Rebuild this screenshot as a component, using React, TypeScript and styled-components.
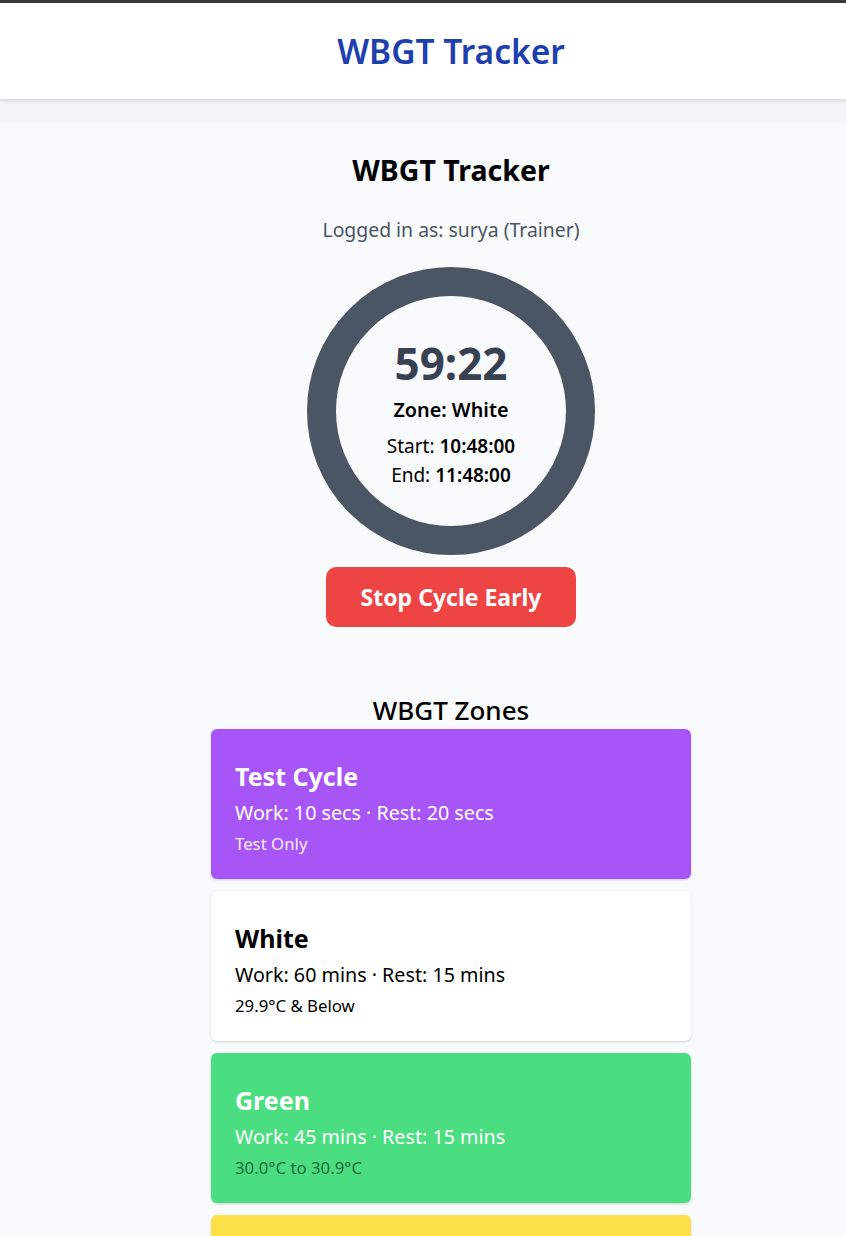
import React from "react";
import styled, { createGlobalStyle } from "styled-components";

const GlobalStyle = createGlobalStyle`
  html, body {
    margin: 0;
    padding: 0;
    overflow-x: hidden;
    background: #f9fafb;
  }
  body {
    font-family: "Noto Sans", "Open Sans", Arial, sans-serif;
    color: #000;
  }
  * { box-sizing: border-box; }
`;

const Page = styled.div`
  width: 902px;
  min-height: 1236px;
  border-top: 3px solid #3b3b3b;
  background: #f9fafb;
`;

const Header = styled.header`
  height: 96px;
  background: #ffffff;
  display: flex;
  align-items: center;
  justify-content: center;
  box-shadow: 0 2px 4px rgba(0, 0, 0, 0.12);
  position: relative;
  z-index: 1;
`;

const HeaderTitle = styled.h1`
  margin: 0;
  font-size: 33.5px;
  font-weight: 600;
  color: #1e40af;
`;

const Gap = styled.div`
  height: 23px;
  background: #f3f4f6;
`;

const Main = styled.main`
  display: flex;
  flex-direction: column;
  align-items: center;
  padding-top: 30px;
`;

const Title = styled.h2`
  margin: 0;
  font-size: 28.5px;
  line-height: 36px;
  font-weight: 700;
`;

const LoggedIn = styled.p`
  margin: 29px 0 0;
  font-size: 19.4px;
  line-height: 26px;
  color: #4b5563;
`;

const Ring = styled.div`
  margin-top: 24px;
  width: 288px;
  height: 288px;
  border-radius: 50%;
  border: 29px solid #4b5563;
  display: flex;
  flex-direction: column;
  align-items: center;
  justify-content: center;
`;

const Time = styled.div`
  font-size: 44px;
  line-height: 56px;
  font-weight: 700;
  color: #374151;
  margin-top: 2px;
`;

const Zone = styled.div`
  font-size: 19.8px;
  line-height: 28px;
  font-weight: 600;
  margin-top: 5px;
`;

const TimeLine = styled.div<{ $first?: boolean }>`
  font-size: 19px;
  line-height: 29px;
  margin-top: ${(p) => (p.$first ? "8px" : "0")};
  b { font-weight: 600; }
`;

const StopButton = styled.button`
  margin-top: 12px;
  width: 250px;
  height: 60px;
  border: none;
  border-radius: 10px;
  background: #ef4444;
  color: #ffffff;
  font-family: inherit;
  font-size: 23px;
  font-weight: 700;
  cursor: pointer;
`;

const ZonesTitle = styled.h3`
  margin: 66px 0 0;
  font-size: 26px;
  line-height: 34px;
  font-weight: 500;
`;

const ZoneList = styled.div`
  margin-top: 2px;
  width: 480px;
  display: flex;
  flex-direction: column;
  gap: 12px;
`;

const Card = styled.div<{ $bg: string; $fg: string }>`
  height: 150px;
  border-radius: 6px;
  background: ${(p) => p.$bg};
  color: ${(p) => p.$fg};
  box-shadow: 0 1px 3px rgba(0, 0, 0, 0.12), 0 1px 2px rgba(0, 0, 0, 0.06);
  padding: 31px 24px 0;
  display: flex;
  flex-direction: column;
`;

const CardTitle = styled.div`
  font-size: 25px;
  line-height: 32px;
  font-weight: 700;
`;

const CardWork = styled.div`
  margin-top: 7px;
  font-size: 19.7px;
  line-height: 28px;
`;

const CardSub = styled.div<{ $color: string }>`
  margin-top: 6px;
  font-size: 16.8px;
  line-height: 22px;
  color: ${(p) => p.$color};
`;

const zones = [
  { name: "Test Cycle", work: "Work: 10 secs · Rest: 20 secs", sub: "Test Only", bg: "#a855f7", fg: "#ffffff", sc: "rgba(255,255,255,0.92)" },
  { name: "White", work: "Work: 60 mins · Rest: 15 mins", sub: "29.9°C & Below", bg: "#ffffff", fg: "#000000", sc: "#000000" },
  { name: "Green", work: "Work: 45 mins · Rest: 15 mins", sub: "30.0°C to 30.9°C", bg: "#4ade80", fg: "#ffffff", sc: "#1f6b3e" },
  { name: "Yellow", work: "Work: 30 mins · Rest: 15 mins", sub: "31.0°C to 31.9°C", bg: "#fde047", fg: "#000000", sc: "#4b5563" },
];

export default function App() {
  return (
    <>
      <GlobalStyle />
      <Page>
        <Header>
          <HeaderTitle>WBGT Tracker</HeaderTitle>
        </Header>
        <Gap />
        <Main>
          <Title>WBGT Tracker</Title>
          <LoggedIn>Logged in as: surya (Trainer)</LoggedIn>
          <Ring>
            <Time>59:22</Time>
            <Zone>Zone: White</Zone>
            <TimeLine $first>
              Start: <b>10:48:00</b>
            </TimeLine>
            <TimeLine>
              End: <b>11:48:00</b>
            </TimeLine>
          </Ring>
          <StopButton>Stop Cycle Early</StopButton>
          <ZonesTitle>WBGT Zones</ZonesTitle>
          <ZoneList>
            {zones.map((z) => (
              <Card key={z.name} $bg={z.bg} $fg={z.fg}>
                <CardTitle>{z.name}</CardTitle>
                <CardWork>{z.work}</CardWork>
                <CardSub $color={z.sc}>{z.sub}</CardSub>
              </Card>
            ))}
          </ZoneList>
        </Main>
      </Page>
    </>
  );
}
